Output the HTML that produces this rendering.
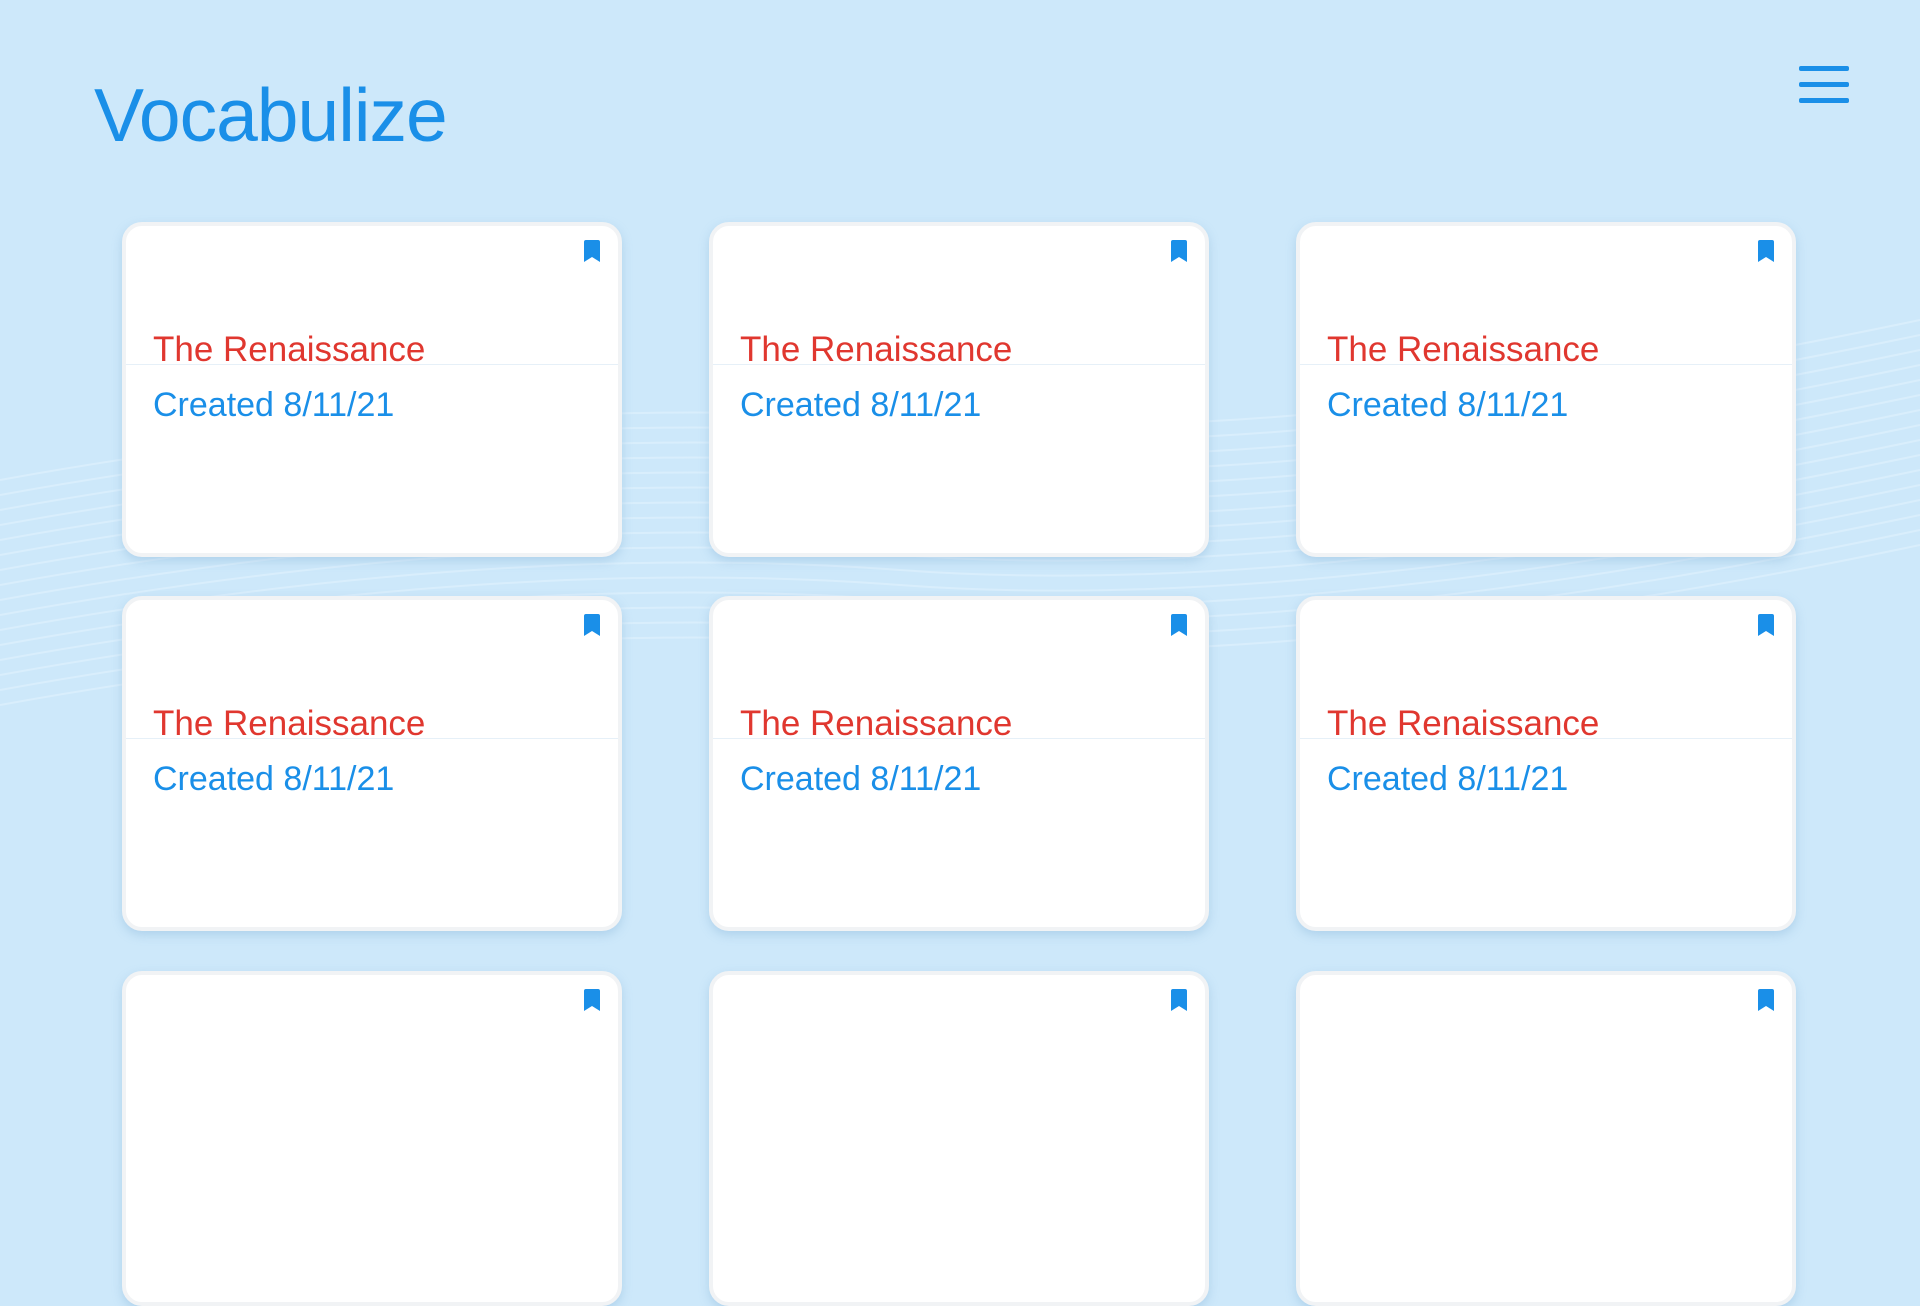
<!DOCTYPE html>
<html><head><meta charset="utf-8"><style>
html,body{margin:0;padding:0}
body{width:1920px;height:1048px;overflow:hidden;background:#cde8fa;position:relative;font-family:"Liberation Sans",sans-serif}
.title{position:absolute;left:94px;top:78px;font-size:75px;color:#1a8fe8;letter-spacing:-1px;line-height:1}
.ham{position:absolute;left:1799px;width:50px;height:5px;background:#1a8fe8;border-radius:2px}
.card{position:absolute;width:492px;height:327px;background:#fff;border:4px solid #f1f3f5;border-radius:20px;box-shadow:0 4px 10px rgba(120,170,210,.35);overflow:hidden}
.bm{position:absolute;left:456px;top:14px}
.t{position:absolute;left:27px;top:106px;font-size:35px;color:#e0372f;line-height:1}
.hr{position:absolute;left:0;right:0;top:138px;height:1px;background:#e6f0f8}
.c{position:absolute;left:27px;top:162px;font-size:34px;color:#1a8fe8;line-height:1}
.bg{position:absolute;left:0;top:280px}
</style></head><body>
<svg class="bg" width="1920" height="480" viewBox="0 0 1920 480">
<g fill="none" stroke="#d9eefc" stroke-width="2">
<path d="M0 200 Q500 110 900 140 T1920 40"/>
<path d="M0 215 Q500 125 900 155 T1920 55"/>
<path d="M0 230 Q500 140 900 170 T1920 70"/>
<path d="M0 245 Q500 155 900 185 T1920 85"/>
<path d="M0 260 Q500 170 900 200 T1920 100"/>
<path d="M0 275 Q500 185 900 215 T1920 115"/>
<path d="M0 290 Q500 200 900 230 T1920 130"/>
<path d="M0 305 Q500 215 900 245 T1920 145"/>
<path d="M0 320 Q500 230 900 260 T1920 160"/>
<path d="M0 335 Q500 245 900 275 T1920 175"/>
<path d="M0 350 Q500 260 900 290 T1920 190"/>
<path d="M0 365 Q500 275 900 305 T1920 205"/>
<path d="M0 380 Q500 290 900 320 T1920 220"/>
<path d="M0 395 Q500 305 900 335 T1920 235"/>
<path d="M0 410 Q500 320 900 350 T1920 250"/>
<path d="M0 425 Q500 335 900 365 T1920 265"/>
</g></svg>
<div class="title">Vocabulize</div>
<div class="ham" style="top:66px"></div>
<div class="ham" style="top:82px"></div>
<div class="ham" style="top:98px"></div>
<div class="card" style="left:122px;top:222px"><svg class="bm" width="20" height="24" viewBox="0 0 20 24"><path d="M2 2Q2 0 4 0H16Q18 0 18 2V22L10 17L2 22Z" fill="#1a8fe8"/></svg><div class="t">The Renaissance</div><div class="hr"></div><div class="c">Created 8/11/21</div></div>
<div class="card" style="left:709px;top:222px"><svg class="bm" width="20" height="24" viewBox="0 0 20 24"><path d="M2 2Q2 0 4 0H16Q18 0 18 2V22L10 17L2 22Z" fill="#1a8fe8"/></svg><div class="t">The Renaissance</div><div class="hr"></div><div class="c">Created 8/11/21</div></div>
<div class="card" style="left:1296px;top:222px"><svg class="bm" width="20" height="24" viewBox="0 0 20 24"><path d="M2 2Q2 0 4 0H16Q18 0 18 2V22L10 17L2 22Z" fill="#1a8fe8"/></svg><div class="t">The Renaissance</div><div class="hr"></div><div class="c">Created 8/11/21</div></div>
<div class="card" style="left:122px;top:596px"><svg class="bm" width="20" height="24" viewBox="0 0 20 24"><path d="M2 2Q2 0 4 0H16Q18 0 18 2V22L10 17L2 22Z" fill="#1a8fe8"/></svg><div class="t">The Renaissance</div><div class="hr"></div><div class="c">Created 8/11/21</div></div>
<div class="card" style="left:709px;top:596px"><svg class="bm" width="20" height="24" viewBox="0 0 20 24"><path d="M2 2Q2 0 4 0H16Q18 0 18 2V22L10 17L2 22Z" fill="#1a8fe8"/></svg><div class="t">The Renaissance</div><div class="hr"></div><div class="c">Created 8/11/21</div></div>
<div class="card" style="left:1296px;top:596px"><svg class="bm" width="20" height="24" viewBox="0 0 20 24"><path d="M2 2Q2 0 4 0H16Q18 0 18 2V22L10 17L2 22Z" fill="#1a8fe8"/></svg><div class="t">The Renaissance</div><div class="hr"></div><div class="c">Created 8/11/21</div></div>
<div class="card" style="left:122px;top:971px"><svg class="bm" width="20" height="24" viewBox="0 0 20 24"><path d="M2 2Q2 0 4 0H16Q18 0 18 2V22L10 17L2 22Z" fill="#1a8fe8"/></svg></div>
<div class="card" style="left:709px;top:971px"><svg class="bm" width="20" height="24" viewBox="0 0 20 24"><path d="M2 2Q2 0 4 0H16Q18 0 18 2V22L10 17L2 22Z" fill="#1a8fe8"/></svg></div>
<div class="card" style="left:1296px;top:971px"><svg class="bm" width="20" height="24" viewBox="0 0 20 24"><path d="M2 2Q2 0 4 0H16Q18 0 18 2V22L10 17L2 22Z" fill="#1a8fe8"/></svg></div>
</body></html>
